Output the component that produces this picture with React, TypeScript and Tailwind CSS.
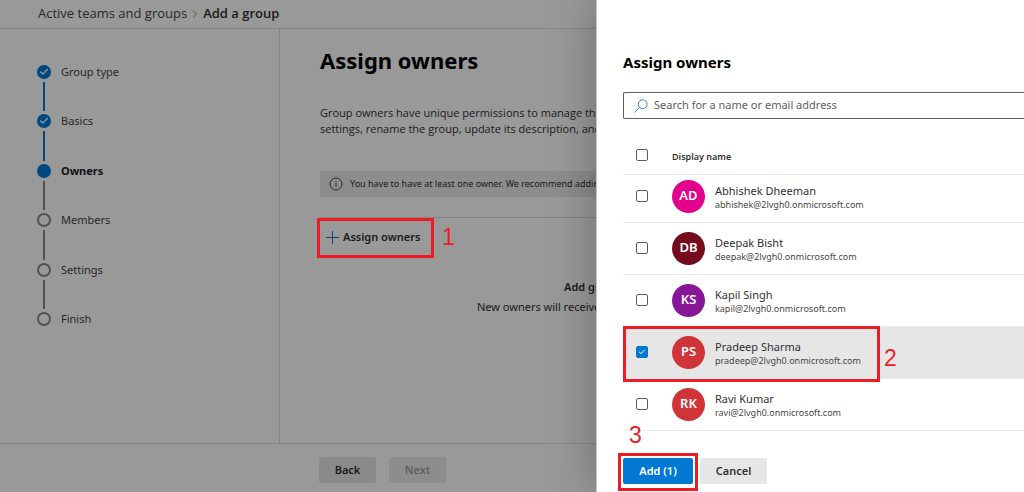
import React from "react"
import clsx from "clsx"
import { Check, ChevronRight } from "lucide-react"

interface Step {
  label: string
  state: "done" | "current" | "todo"
}

interface Owner {
  name: string
  email: string
  initials: string
  color: string
  selected?: boolean
}

const steps: Step[] = [
  { label: "Group type", state: "done" },
  { label: "Basics", state: "done" },
  { label: "Owners", state: "current" },
  { label: "Members", state: "todo" },
  { label: "Settings", state: "todo" },
  { label: "Finish", state: "todo" },
]

const owners: Owner[] = [
  { name: "Abhishek Dheeman", email: "abhishek@2lvgh0.onmicrosoft.com", initials: "AD", color: "bg-[#e3008c]" },
  { name: "Deepak Bisht", email: "deepak@2lvgh0.onmicrosoft.com", initials: "DB", color: "bg-[#750b1c]" },
  { name: "Kapil Singh", email: "kapil@2lvgh0.onmicrosoft.com", initials: "KS", color: "bg-[#881798]" },
  { name: "Pradeep Sharma", email: "pradeep@2lvgh0.onmicrosoft.com", initials: "PS", color: "bg-[#d13438]", selected: true },
  { name: "Ravi Kumar", email: "ravi@2lvgh0.onmicrosoft.com", initials: "RK", color: "bg-[#d13438]" },
]

// Numbered red callout, drawn above the scrim
function Callout({ box, label, n }: { box: string; label: string; n: number }) {
  return (
    <>
      <span className={clsx("pointer-events-none absolute z-30 border-3 border-[#ed1c24]", box)} />
      <span
        className={clsx(
          "pointer-events-none absolute z-30 font-['Liberation_Sans',sans-serif] text-[23px] leading-6 font-normal text-[#ed1c24]",
          label
        )}
      >
        {n}
      </span>
    </>
  )
}

function Checkbox({ label, checked }: { label: string; checked?: boolean }) {
  return (
    <span className="relative ml-[13px] flex size-3 shrink-0">
      <input
        type="checkbox"
        aria-label={label}
        defaultChecked={checked}
        className="peer size-3 appearance-none rounded-xs border border-[#605e5c] bg-white checked:border-[#0078d4] checked:bg-[#0078d4]"
      />
      <Check className="pointer-events-none absolute inset-0.5 hidden size-2 text-white peer-checked:block" strokeWidth={3} />
    </span>
  )
}

function StepList() {
  return (
    <ol className="flex h-[261px] flex-col text-[11px] text-[#484644]">
      {steps.map((step, i) => {
        const last = i === steps.length - 1
        return (
          <li key={step.label} className={clsx("flex gap-2.5", !last && "flex-1")}>
            <div className="flex flex-col items-center">
              <span
                className={clsx(
                  "flex size-3.5 shrink-0 items-center justify-center rounded-full",
                  step.state === "todo" ? "border-2 border-[#8a8886]" : "bg-[#0078d4]"
                )}
              >
                {step.state === "done" && <Check className="size-2.5 text-white" strokeWidth={3} />}
              </span>
              {!last && (
                <span className={clsx("my-[3px] w-0.5 flex-1", step.state === "done" ? "bg-[#0078d4]" : "bg-[#8a8886]")} />
              )}
            </div>
            <span className={clsx("leading-3.5", step.state === "current" && "font-bold text-[#201f1e]")}>{step.label}</span>
          </li>
        )
      })}
    </ol>
  )
}

function OwnersPanel() {
  return (
    <aside
      role="dialog"
      aria-label="Assign owners"
      className="absolute inset-y-0 right-0 z-20 flex w-[428px] flex-col border-l border-[#c8c6c4] bg-white pl-[26px] shadow-[0_0_44px_rgba(0,0,0,0.3)]"
    >
      <h2 className="mt-[50px] text-[15px] leading-6 font-bold text-black">Assign owners</h2>

      <div className="mt-[18px] flex h-[27px] shrink-0 items-center gap-1.5 rounded-l-xs border-y border-l border-[#605e5c] pl-2.5">
        <svg viewBox="0 0 14 14" className="size-3.5 shrink-0" fill="none" stroke="#3b82e0">
          <circle cx="8.7" cy="5.2" r="4.4" />
          <path d="M5.5 8.5 0.6 13.4" />
        </svg>
        <input
          type="search"
          aria-label="Search for a name or email address"
          placeholder="Search for a name or email address"
          className="min-w-0 flex-1 text-[11px] outline-none placeholder:text-[#605e5c]"
        />
      </div>

      <div className="relative mt-[17px]">
        <table className="w-full table-fixed border-collapse text-left">
          <thead>
            <tr className="h-[38px] border-b border-[#edebe9]">
              <th className="w-[49px] p-0">
                <Checkbox label="Select all" />
              </th>
              <th className="p-0 pt-1 text-[9px] font-semibold text-[#323130]">Display name</th>
            </tr>
          </thead>
          <tbody>
            {owners.map((owner, i) => (
              <tr
                key={owner.email}
                className={clsx("border-b border-[#edebe9]", i === 0 ? "h-12" : "h-[52px]", owner.selected && "bg-[#e6e6e6]")}
              >
                <td className="p-0 pb-[9px] align-bottom">
                  <div className="flex h-[34px] items-center">
                    <Checkbox label={owner.name} checked={owner.selected} />
                  </div>
                </td>
                <td className="p-0 pb-[9px] align-bottom">
                  <div className="flex items-center gap-2.5">
                    <span
                      className={clsx(
                        "flex size-[33px] shrink-0 items-center justify-center rounded-full text-[13px] font-semibold text-white",
                        owner.color
                      )}
                    >
                      {owner.initials}
                    </span>
                    <div className="pt-1 text-[#323130]">
                      <div className="text-[11px] leading-3.5">{owner.name}</div>
                      <div className="text-[9px] leading-3.5 text-[#484644]">{owner.email}</div>
                    </div>
                  </div>
                </td>
              </tr>
            ))}
          </tbody>
        </table>
        <Callout n={2} box="bottom-[49px] left-0 h-14 w-[257px]" label="bottom-[61px] left-[261px]" />
      </div>

      <div className="relative mt-auto mb-2 flex gap-[7px] text-[11px] font-semibold">
        <button type="button" className="h-[26px] w-[70px] rounded-xs bg-[#0078d4] text-white">
          Add (1)
        </button>
        <button type="button" className="h-[26px] w-[67px] rounded-xs bg-[#e6e6e6] text-[#323130]">
          Cancel
        </button>
        <Callout n={3} box="-top-[5px] -left-[5px] h-[38px] w-20" label="-top-[35px] left-1.5" />
      </div>
    </aside>
  )
}

export default function App() {
  return (
    <div className="relative flex min-h-screen flex-col overflow-hidden bg-white font-['Noto_Sans','Open_Sans',sans-serif] text-[#323130]">
      {/* Breadcrumb */}
      <nav className="flex h-[29px] items-center gap-0.5 border-b border-[#dddddd] pl-[38px] font-['Open_Sans',sans-serif] text-[13px]">
        <a href="#teams" className="text-[#484644]">
          Active teams and groups
        </a>
        <ChevronRight className="size-3 text-[#8a8886]" />
        <span className="font-semibold">Add a group</span>
      </nav>

      <div className="flex flex-1">
        <div className="w-[280px] shrink-0 border-r border-[#e1dfdd] pt-9 pl-[37px]">
          <StepList />
        </div>

        <main className="min-w-0 flex-1 overflow-hidden pl-10 whitespace-nowrap">
          <h1 className="mt-[15px] text-[22px] leading-8 font-bold text-black">Assign owners</h1>
          <p className="mt-[29px] font-['Open_Sans',sans-serif] text-[11px] leading-4">
            Group owners have unique permissions to manage the
            <br />
            settings, rename the group, update its description, and
          </p>
          <div className="mt-[34px] flex h-[26px] items-center gap-[7px] bg-[#ebebeb] pl-[9px] text-[9px]">
            <svg viewBox="0 0 14 14" className="size-3.5" fill="none" stroke="#484644">
              <circle cx="7" cy="7" r="6" />
              <path d="M7 6v4M7 3.8v1.2" />
            </svg>
            You have to have at least one owner. We recommend adding
          </div>
          <div className="relative mt-5 flex h-10 items-center border-t border-[#dddddd]">
            <button type="button" className="flex items-center gap-1 pl-1.5 text-[11px] font-semibold">
              <svg viewBox="0 0 13 13" className="size-[13px]" stroke="#2b6cc4">
                <path d="M6.5 0v13M0 6.5h13" />
              </svg>
              Assign owners
            </button>
            <Callout n={1} box="top-0 -left-[3px] h-10 w-[117px]" label="top-[7px] left-[122px]" />
          </div>
          <div className="mt-5 pl-[157px]">
            <h3 className="pl-[87px] text-[11px] leading-5 font-semibold">Add group</h3>
            <p className="text-[11px] leading-5">New owners will receive</p>
          </div>
        </main>
      </div>

      <footer className="flex h-[49px] items-center gap-[13px] border-t border-[#dddddd] pl-[319px] text-[11px] font-semibold">
        <button type="button" className="mt-1 h-[26px] w-[57px] rounded-xs bg-[#e6e6e6]">
          Back
        </button>
        <button type="button" disabled className="mt-1 h-[26px] w-[57px] rounded-xs bg-[#ebebeb] text-[#a19f9d]">
          Next
        </button>
      </footer>

      <div className="absolute inset-0 z-10 bg-black/40" />
      <OwnersPanel />
    </div>
  )
}
